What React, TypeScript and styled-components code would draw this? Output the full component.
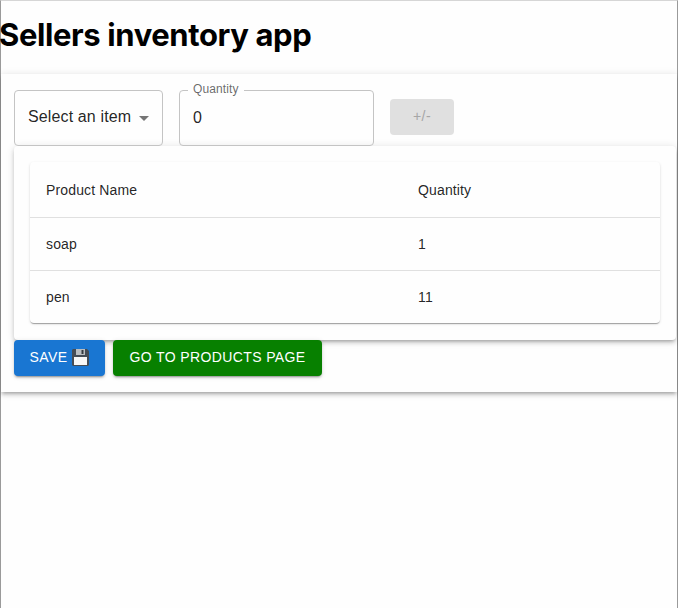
import React from "react";
import styled, { createGlobalStyle } from "styled-components";

const GlobalStyle = createGlobalStyle`
  *, *::before, *::after { box-sizing: border-box; }
  body { margin: 0; background: #fefefe; font-family: "Liberation Sans", Arial, sans-serif; }
`;

const raised =
  "0 3px 3px -2px rgba(0,0,0,.2), 0 3px 4px 0 rgba(0,0,0,.14), 0 1px 8px 0 rgba(0,0,0,.12)";

const Window = styled.main`
  height: 608px;
  border: solid #9a9a9a;
  border-width: 1px 1px 0;
  border-top-color: #d6d6d6;
  background: #fefefe;
  color: rgba(0, 0, 0, 0.87);
`;

const Title = styled.h1`
  margin: 14px 0 20px -2px;
  color: #000;
  font: 700 31px/39px Inter, sans-serif;
  letter-spacing: -0.39px;
  white-space: nowrap;
`;

const Panel = styled.section`
  height: 318px;
  padding: 16px 0 0 13px;
  background: #fefefe;
  box-shadow: ${raised};
`;

const Controls = styled.form`
  display: flex;
  align-items: flex-start;
  gap: 16px;
  height: 56px;
`;

const Field = styled.fieldset<{ $width: number }>`
  display: flex;
  align-items: center;
  position: relative;
  width: ${(p) => p.$width}px;
  height: 56px;
  margin: 0;
  padding: 0 13px;
  border: 1px solid #c4c4c4;
  border-radius: 4px;
  font-size: 16px;
`;

const FieldLabel = styled.span`
  position: absolute;
  top: -9px;
  left: 8px;
  padding: 0 5px;
  background: #fefefe;
  color: rgba(0, 0, 0, 0.6);
  font-size: 12px;
  line-height: 14px;
  letter-spacing: 0.12px;
`;

const SelectText = styled.span`
  padding-bottom: 2px;
  letter-spacing: 0.13px;
  white-space: nowrap;
`;

const Arrow = styled.svg`
  width: 10px;
  height: 5px;
  margin-left: auto;
  flex: none;
`;

const Button = styled.button<{ $tone: "disabled" | "blue" | "green"; $width: number }>`
  display: flex;
  align-items: center;
  justify-content: center;
  gap: 5px;
  width: ${(p) => p.$width}px;
  height: 36px;
  margin-top: ${(p) => (p.$tone === "disabled" ? 9 : 0)}px;
  padding: 0 0 2px;
  border: 0;
  border-radius: 4px;
  font: 400 14px/24px "Liberation Sans", Arial, sans-serif;
  letter-spacing: 0.38px;
  white-space: nowrap;
  color: ${(p) => (p.$tone === "disabled" ? "#a6a6a6" : "#fff")};
  background: ${(p) => ({ disabled: "#e0e0e0", blue: "#1976d2", green: "#078000" })[p.$tone]};
  box-shadow: ${(p) =>
    p.$tone === "disabled"
      ? "none"
      : "0 3px 1px -2px rgba(0,0,0,.2), 0 2px 2px 0 rgba(0,0,0,.14), 0 1px 5px 0 rgba(0,0,0,.12)"};
`;

const Inventory = styled.section`
  width: 662px;
  height: 194px;
  padding: 16px;
  border-radius: 4px;
  background: #fefefe;
  box-shadow: ${raised};
`;

const TableCard = styled.div`
  height: 161px;
  overflow: hidden;
  border-radius: 4px;
  box-shadow: 0 2px 1px -1px rgba(0,0,0,.2), 0 1px 1px 0 rgba(0,0,0,.14), 0 1px 3px 0 rgba(0,0,0,.12);
`;

const Row = styled.div<{ $header?: boolean }>`
  display: grid;
  grid-template-columns: 372px 1fr;
  align-items: center;
  height: ${(p) => (p.$header ? 56 : 53)}px;
  padding: 0 16px;
  border-bottom: 1px solid #e0e0e0;
  font-size: 14px;
  letter-spacing: 0.14px;
  &:last-child { height: 52px; border-bottom: 0; }
`;

const Actions = styled.div`
  display: flex;
  gap: 8px;
`;

const Disk = styled.svg`
  width: 17px;
  height: 17px;
  flex: none;
`;

const products = [
  { name: "soap", quantity: 1 },
  { name: "pen", quantity: 11 },
];

export default function App() {
  return (
    <>
      <GlobalStyle />
      <Window>
        <Title>Sellers inventory app</Title>
        <Panel>
          <Controls>
            <Field $width={149}>
              <SelectText>Select an item</SelectText>
              <Arrow viewBox="0 0 10 5"><path d="M0 0h10L5 5z" fill="#757575" /></Arrow>
            </Field>
            <Field $width={195}>
              <FieldLabel>Quantity</FieldLabel>0
            </Field>
            <Button type="button" disabled $tone="disabled" $width={64}>+/-</Button>
          </Controls>
          <Inventory>
            <TableCard>
              <Row $header><span>Product Name</span><span>Quantity</span></Row>
              {products.map((p) => (
                <Row key={p.name}><span>{p.name}</span><span>{p.quantity}</span></Row>
              ))}
            </TableCard>
          </Inventory>
          <Actions>
            <Button $tone="blue" $width={91}>
              SAVE
              <Disk viewBox="0 0 17 17">
                <path d="M1 0h14l2 2v14l-1 1H1l-1-1V1z" fill="#454c55" />
                <path d="M4 0h9v6H4z" fill="#b9bdc1" />
                <path d="M9.5 1h2v4h-2z" fill="#33383e" />
                <path d="M2 8h13v8H2z" fill="#f7f7f7" />
              </Disk>
            </Button>
            <Button $tone="green" $width={209}>GO TO PRODUCTS PAGE</Button>
          </Actions>
        </Panel>
      </Window>
    </>
  );
}
